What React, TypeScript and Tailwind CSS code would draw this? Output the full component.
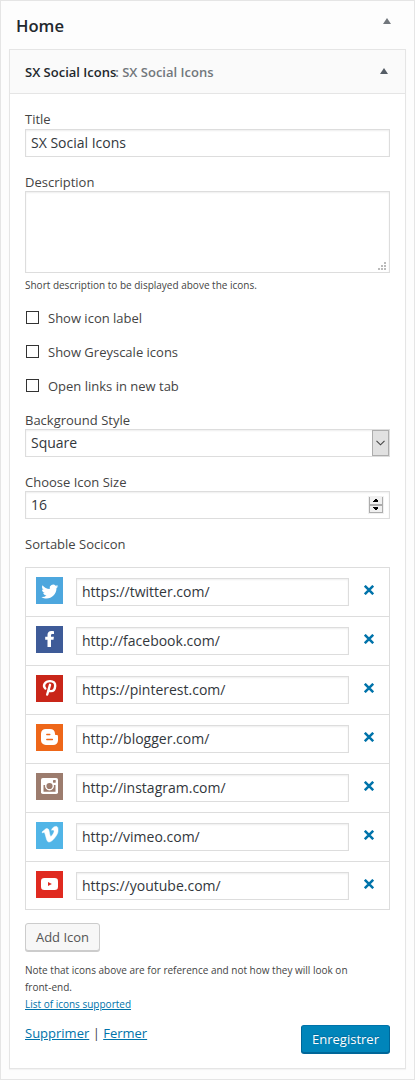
import React from "react";

const field =
  "block h-7 w-full border border-[#ddd] bg-white text-[14px] leading-[26px] text-[#32373c] shadow-[inset_0_1px_2px_rgba(0,0,0,0.07)] outline-none";

function Twitter() {
  return (
    <path
      fill="#fff"
      d="M22.3 9.3c-.6.3-1.3.5-2 .5.7-.4 1.3-1.100 1.500-1.900-.7.4-1.400.7-2.200.8a3.500 3.500 0 0 0-5.900 3.200c-2.900-.1-5.500-1.500-7.200-3.700-.9 1.600-.5 3.600 1.100 4.700-.6 0-1.100-.2-1.600-.4 0 1.700 1.200 3.100 2.800 3.500-.5.1-1 .1-1.600 0 .4 1.400 1.700 2.400 3.300 2.400A7 7 0 0 1 5.400 20c6.500 4 15.200-.3 15.100-8.900.7-.5 1.300-1.100 1.800-1.800z"
    />
  );
}

function Facebook() {
  return (
    <path
      fill="#fff"
      d="M11.500 21v-7.200H9.200v-3h2.300V8.800c0-2.500 1.500-3.800 3.800-3.800.9 0 1.700.1 2.700.2v2.700h-1.500c-1.200 0-1.500.6-1.500 1.500v1.400h2.900l-.4 3H15V21z"
    />
  );
}

function Pinterest() {
  return (
    <path
      fill="none"
      stroke="#fff"
      strokeWidth="2.400"
      strokeLinecap="round"
      strokeLinejoin="round"
      d="M9.300 13.500C6.300 10.300 9.100 6.100 14 6.100c3.500 0 5.400 2 5.200 4.700-.2 3.200-2 5.300-4.200 5.300-1.600 0-2.400-.9-2.200-2M14 9.800l-2.800 9.700"
    />
  );
}

function Blogger() {
  return (
    <>
      <path
        fill="#fff"
        d="M9.800 5h4.300c3 0 4.900 2 4.900 4.700 0 1 .3 1.400 1.300 1.400 1.300 0 1.700.4 1.700 1.600v3.500c0 3-2 4.800-4.800 4.800H9.800C7 21 5 19 5 16.300V9.700C5 7 7 5 9.800 5z"
      />
      <path
        stroke="#ee6719"
        strokeWidth="1.400"
        strokeLinecap="round"
        d="M10.800 10.500h3M10.800 15.500h5.600"
      />
    </>
  );
}

function Instagram() {
  return (
    <>
      <rect x="5" y="5" width="17" height="16" rx="1.800" fill="#fff" />
      <path fill="#9c7c6e" d="M7.500 12h1.600a4.500 4.500 0 1 0 8.800 0h1.600v6.700h-12z" />
      <circle cx="13.500" cy="13" r="3.100" fill="#9c7c6e" />
      <rect x="17" y="7" width="2.700" height="2.700" rx=".4" fill="#9c7c6e" />
    </>
  );
}

function Vimeo() {
  return (
    <path
      fill="#fff"
      stroke="#fff"
      strokeWidth=".5"
      d="M22 9.300c-.1 1.700-1.200 4-3.400 6.700-2.200 2.800-4.100 4-5.600 4-1 0-1.700-.8-2.400-2.500l-1.300-4.700c-.5-1.700-1-2.500-1.500-2.500-.1 0-.5.3-1.200.7l-.6-1 2.400-2c1.100-.9 1.800-1.400 2.300-1.400 1.300-.1 2.100.7 2.400 2.500.6 3.400 1.100 5.400 1.700 5.400.4 0 1.100-.7 1.900-1.900.9-1.300 1.300-2.300 1.400-3 .1-1.100-.3-1.600-1.400-1.600l-1.200.2c.9-2.700 2.600-3.900 4.700-3.800 1.400 0 1.900 1.400 1.800 3.200z"
    />
  );
}

function Youtube() {
  return (
    <>
      <rect x="5" y="7" width="17" height="12" rx="3.300" fill="#fff" />
      <path fill="#e02a20" d="M12 11v4l3.900-2z" />
    </>
  );
}

const networks = [
  { name: "Twitter", url: "https://twitter.com/", bg: "bg-[#4da7de]", icon: <Twitter /> },
  { name: "Facebook", url: "http://facebook.com/", bg: "bg-[#3e5b98]", icon: <Facebook /> },
  { name: "Pinterest", url: "https://pinterest.com/", bg: "bg-[#c92619]", icon: <Pinterest /> },
  { name: "Blogger", url: "http://blogger.com/", bg: "bg-[#ee6719]", icon: <Blogger /> },
  { name: "Instagram", url: "http://instagram.com/", bg: "bg-[#9c7c6e]", icon: <Instagram /> },
  { name: "Vimeo", url: "http://vimeo.com/", bg: "bg-[#51b5e7]", icon: <Vimeo /> },
  { name: "YouTube", url: "https://youtube.com/", bg: "bg-[#e02a20]", icon: <Youtube /> },
];

const toggles = ["Show icon label", "Show Greyscale icons", "Open links in new tab"];

function Arrow({ className }: { className: string }) {
  return (
    <svg width="8" height="6" viewBox="0 0 8 6" className={className}>
      <path d="M4 0 8 6H0z" fill="currentColor" />
    </svg>
  );
}

export default function App() {
  return (
    <div className="h-[1080px] w-[415px] border border-[#e5e5e5] bg-[#fdfdfd] px-2 font-['Open_Sans',sans-serif] text-[13px] text-[#444]">
      <header className="flex h-12 justify-between pl-[7px] pr-[15px]">
        <h2 className="pt-[13px] text-[16.600px] font-semibold leading-6 text-[#23282d]">Home</h2>
        <Arrow className="mt-[17px] text-[#72777c]" />
      </header>

      <section className="h-[1020px] border border-[#e5e5e5] bg-white shadow-[0_1px_1px_rgba(0,0,0,0.04)]">
        <div className="flex h-11 justify-between border-b border-[#e5e5e5] bg-[#fafafa] pl-[15px] pr-[17px]">
          <h3 className="pt-[13px] font-semibold leading-[18px] text-[#23282d]">
            SX Social Icons<span className="-ml-px text-[#72777c]">: SX Social Icons</span>
          </h3>
          <Arrow className="mt-[18px] text-[#555d66]" />
        </div>

        <div className="px-[15px] pt-4">
          <label className="block h-[19px] leading-[19px]">Title</label>
          <input className={field + " px-[5px] pb-[2px]"} defaultValue="SX Social Icons" />

          <label className="mt-4 block h-[18px] leading-[18px]">Description</label>
          <div className="relative h-[82px]">
            <textarea className="block h-full w-full resize-none border border-[#ddd] bg-white shadow-[inset_0_1px_2px_rgba(0,0,0,0.07)] outline-none" />
            <svg
              width="8"
              height="8"
              viewBox="0 0 8 8"
              className="absolute bottom-[3px] right-1"
              shapeRendering="crispEdges"
            >
              <path
                fill="#bbb"
                d="M6 0h2v2H6zM3 3h2v2H3zM6 3h2v2H6zM0 6h2v2H0zM3 6h2v2H3zM6 6h2v2H6z"
              />
            </svg>
          </div>
          <small className="block h-7 whitespace-nowrap text-[10px] leading-[25px]">
            Short description to be displayed above the icons.
          </small>

          {toggles.map((text) => (
            <label key={text} className="flex h-[34px] items-start gap-[9px] pl-px">
              <input
                type="checkbox"
                className="mt-[10px] size-[13px] appearance-none border border-[#333] bg-white"
              />
              <span className="mt-2 leading-[18px]">{text}</span>
            </label>
          ))}

          <label className="mt-2 block h-[18px] leading-[18px]">Background Style</label>
          <div className={field + " flex justify-between pl-[5px]"}>
            <span>Square</span>
            <span className="flex h-[26px] w-[17px] items-center justify-center border border-[#adadad] bg-[#e1e1e1]">
              <svg width="9" height="6" viewBox="0 0 9 6" fill="none">
                <path d="M.5.8 4.500 4.800 8.500.8" stroke="#444" strokeWidth="1.100" />
              </svg>
            </span>
          </div>

          <label className="mt-4 block h-[18px] leading-[18px]">Choose Icon Size</label>
          <div className={field + " flex items-center justify-between pl-[5px] pr-[5px]"}>
            <span>16</span>
            <svg
              width="16"
              height="18"
              viewBox="0 0 16 18"
              shapeRendering="crispEdges"
            >
              <path fill="#f0f0f0" d="M0 0h16v18H0z" />
              <path fill="#acacac" d="M1 1h1v16H1zM14 1h1v16h-1zM1 8h14v2H1zM1 16h14v1H1z" />
              <path
                fill="#000"
                d="M7 3h2v1H7zM6 4h4v1H6zM5 5h5v1H5zM5 11h5v1H5zM6 12h4v1H6zM7 13h2v1H7z"
              />
            </svg>
          </div>

          <label className="mt-4 block h-8 leading-[18px]">Sortable Socicon</label>
          <ul className="border-b border-[#ddd]">
            {networks.map((n) => (
              <li
                key={n.name}
                className="flex h-[49px] border-x border-t border-[#ddd] pl-[10px] last:h-12"
              >
                <svg
                  width="27"
                  height="27"
                  viewBox="0 0 27 27"
                  fill="none"
                  className={"mt-[9px] shrink-0 " + n.bg}
                >
                  {n.icon}
                </svg>
                <div className="ml-[13px] mt-[10px] w-[273px]">
                  <input className={field + " px-[5px] pb-[2px]"} defaultValue={n.url} />
                </div>
                <button aria-label={n.name} className="ml-[15px] mt-[17px] h-[10px] w-[10px]">
                  <svg width="10" height="10" viewBox="0 0 10 10" fill="none">
                    <path d="m.8.8 8.400 8.400M9.200.8.8 9.200" stroke="#0073aa" strokeWidth="2.500" />
                  </svg>
                </button>
              </li>
            ))}
          </ul>

          <button className="mt-[13px] block h-7 w-[75px] rounded-[3px] border border-[#ccc] bg-[#f7f7f7] leading-[26px] text-[#555] shadow-[0_1px_0_#ccc]">
            Add Icon
          </button>

          <div className="mt-[11px] whitespace-nowrap text-[10px] leading-[17px]">
            <p>
              Note that icons above are for reference and not how they will look on
              <br />
              front-end.
            </p>
            <a className="text-[#0073aa] underline">List of icons supported</a>
          </div>

          <div className="mt-3 flex justify-between">
            <div className="-mt-px leading-[18px]">
              <a className="text-[#0073aa] underline">Supprimer</a> |{" "}
              <a className="text-[#0073aa] underline">Fermer</a>
            </div>
            <button className="h-7 w-[89px] rounded-[3px] border border-[#006799] border-t-[#0073aa] bg-[#0085ba] leading-[26px] text-white shadow-[0_1px_0_#006799] [text-shadow:0_-1px_1px_#006799]">
              Enregistrer
            </button>
          </div>
        </div>
      </section>
    </div>
  );
}
